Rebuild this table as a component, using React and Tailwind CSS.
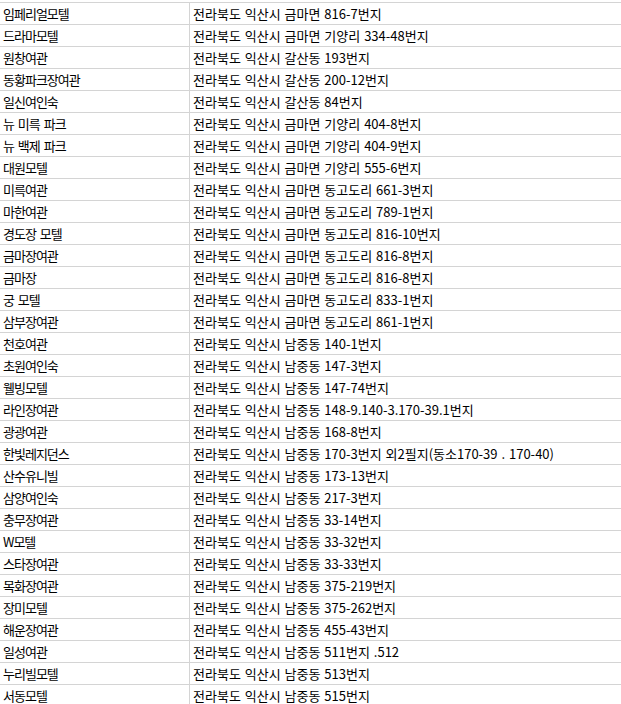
const rows = [
  ["임페리얼모텔", "전라북도 익산시 금마면 816-7번지"],
  ["드라마모텔", "전라북도 익산시 금마면 기양리 334-48번지"],
  ["원창여관", "전라북도 익산시 갈산동 193번지"],
  ["동황파크장여관", "전라북도 익산시 갈산동 200-12번지"],
  ["일신여인숙", "전라북도 익산시 갈산동 84번지"],
  ["뉴 미륵 파크", "전라북도 익산시 금마면 기양리 404-8번지"],
  ["뉴 백제 파크", "전라북도 익산시 금마면 기양리 404-9번지"],
  ["대원모텔", "전라북도 익산시 금마면 기양리 555-6번지"],
  ["미륵여관", "전라북도 익산시 금마면 동고도리 661-3번지"],
  ["마한여관", "전라북도 익산시 금마면 동고도리 789-1번지"],
  ["경도장 모텔", "전라북도 익산시 금마면 동고도리 816-10번지"],
  ["금마장여관", "전라북도 익산시 금마면 동고도리 816-8번지"],
  ["금마장", "전라북도 익산시 금마면 동고도리 816-8번지"],
  ["궁 모텔", "전라북도 익산시 금마면 동고도리 833-1번지"],
  ["삼부장여관", "전라북도 익산시 금마면 동고도리 861-1번지"],
  ["천호여관", "전라북도 익산시 남중동 140-1번지"],
  ["초원여인숙", "전라북도 익산시 남중동 147-3번지"],
  ["웰빙모텔", "전라북도 익산시 남중동 147-74번지"],
  ["라인장여관", "전라북도 익산시 남중동 148-9.140-3.170-39.1번지"],
  ["광광여관", "전라북도 익산시 남중동 168-8번지"],
  ["한빛레지던스", "전라북도 익산시 남중동 170-3번지 외2필지(동소170-39 . 170-40)"],
  ["산수유니빌", "전라북도 익산시 남중동 173-13번지"],
  ["삼양여인숙", "전라북도 익산시 남중동 217-3번지"],
  ["충무장여관", "전라북도 익산시 남중동 33-14번지"],
  ["W모텔", "전라북도 익산시 남중동 33-32번지"],
  ["스타장여관", "전라북도 익산시 남중동 33-33번지"],
  ["목화장여관", "전라북도 익산시 남중동 375-219번지"],
  ["장미모텔", "전라북도 익산시 남중동 375-262번지"],
  ["해운장여관", "전라북도 익산시 남중동 455-43번지"],
  ["일성여관", "전라북도 익산시 남중동 511번지 .512"],
  ["누리빌모텔", "전라북도 익산시 남중동 513번지"],
  ["서동모텔", "전라북도 익산시 남중동 515번지"],
]

export default function App() {
  return (
    <div className="w-[621px] h-[704px] overflow-hidden bg-white pt-[2px] text-[13px] text-black font-['Noto_Sans_CJK_KR',sans-serif]">
      {rows.map(([name, addr], i) => (
        <div key={i} className="flex h-[22px] border-t border-[#d4d4d4] leading-[21px]">
          <div className="w-[190px] shrink-0 border-r border-[#d4d4d4] pl-[3px] whitespace-nowrap tracking-[-1px] [word-spacing:2px]">{name}</div>
          <div className="pl-[3px] whitespace-nowrap [word-spacing:1px]">{addr}</div>
        </div>
      ))}
    </div>
  )
}
